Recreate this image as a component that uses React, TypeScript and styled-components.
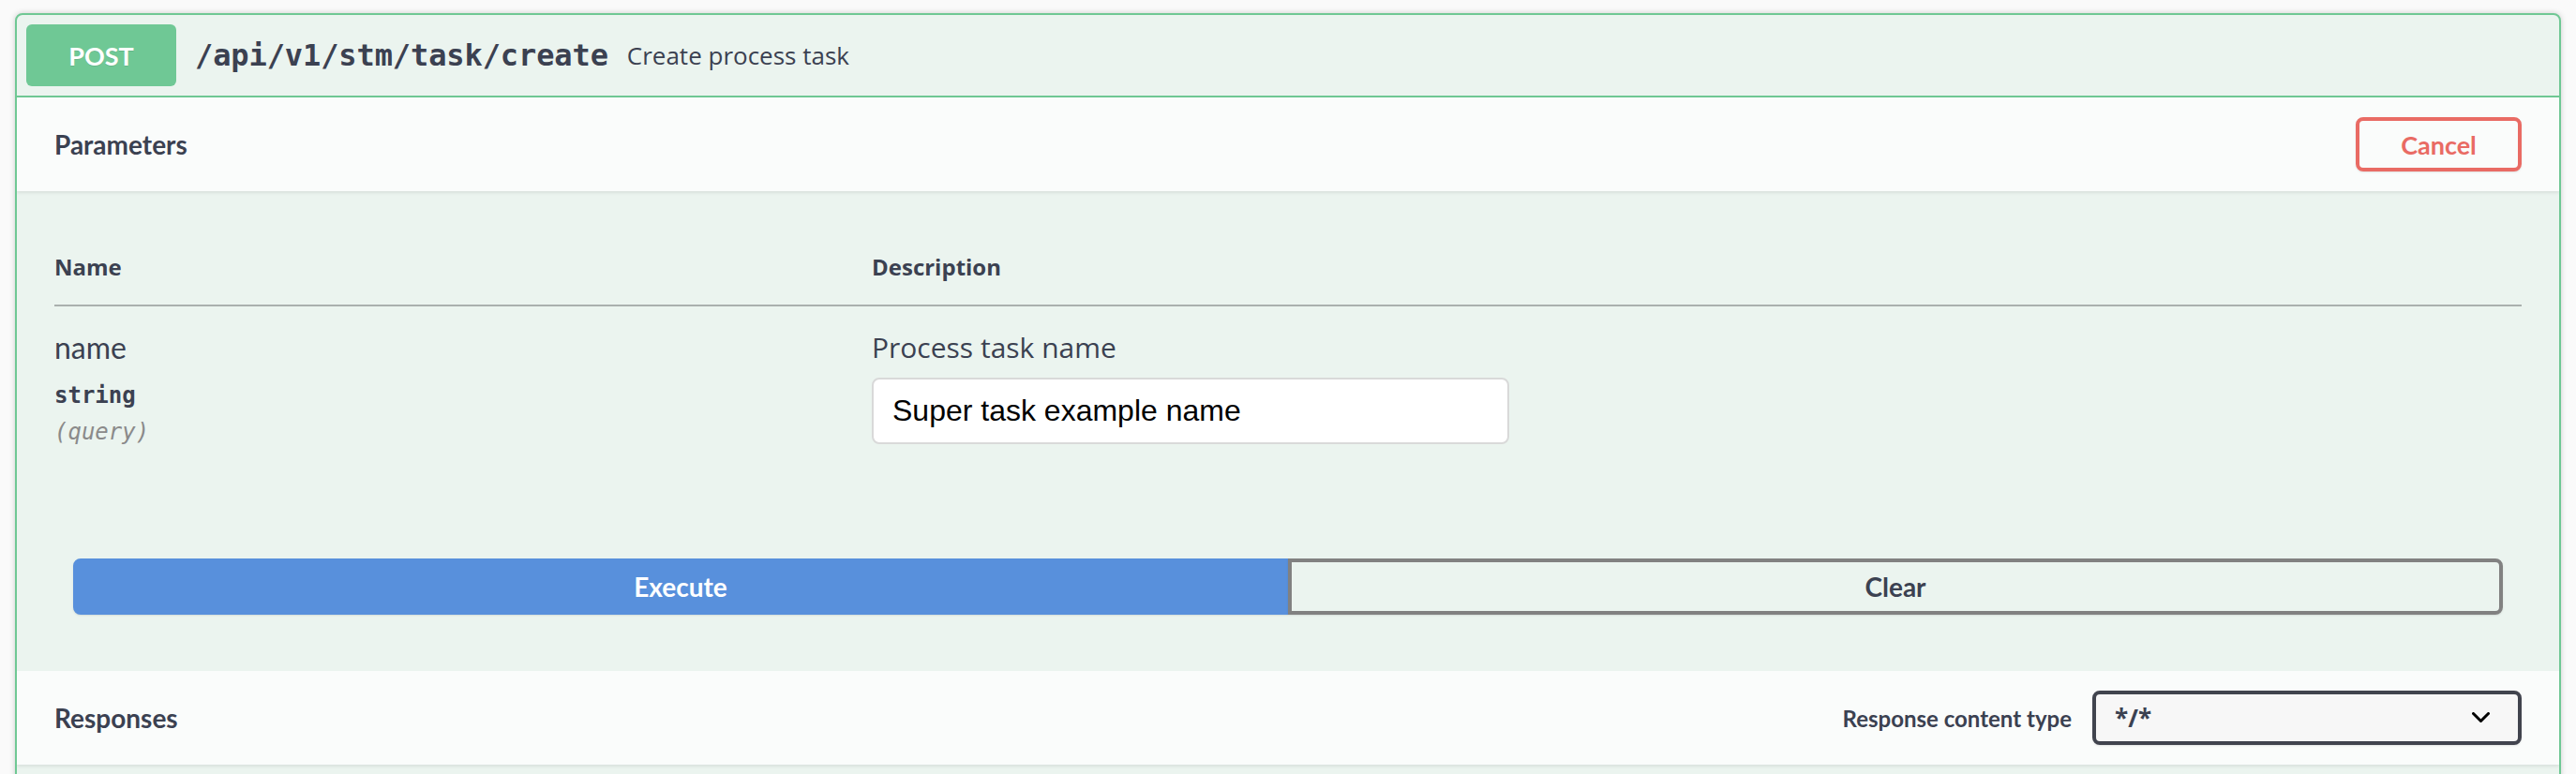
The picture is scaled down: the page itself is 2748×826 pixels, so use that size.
import React from "react";
import styled, { createGlobalStyle } from "styled-components";

const GlobalStyle = createGlobalStyle`
  html, body { margin: 0; padding: 0; background: #fafafa; }
  body { font-family: "Open Sans", "Noto Sans", sans-serif; color: #3b4151; }
  * { box-sizing: border-box; }
`;

const Page = styled.div`
  padding: 14px 16px 0;
`;

const OpBlock = styled.section`
  border: 2px solid #6fc894;
  border-radius: 8px;
  background: #ebf4ef;
  box-shadow: 0 0 6px rgba(0, 0, 0, 0.19);
  overflow: hidden;
`;

const Summary = styled.div`
  display: flex;
  align-items: center;
  padding: 10px;
  border-bottom: 2px solid #6fc894;
`;

const Method = styled.span`
  display: flex;
  align-items: center;
  justify-content: center;
  width: 160px;
  height: 66px;
  border-radius: 6px;
  background: #6fc895;
  color: #fff;
  font-family: Lato, "Open Sans", sans-serif;
  font-weight: 700;
  font-size: 27px;
  text-shadow: 0 1px 0 rgba(0, 0, 0, 0.1);
`;

const Path = styled.span`
  padding: 0 20px;
  font-family: "DejaVu Sans Mono", "Liberation Mono", monospace;
  font-weight: 700;
  font-size: 32px;
  color: #3b4151;
  letter-spacing: -0.1px;
`;

const Summary_Desc = styled.span`
  font-family: "Open Sans", sans-serif;
  font-size: 26px;
  color: #3b4151;
`;

const SectionHeader = styled.div`
  display: flex;
  align-items: center;
  justify-content: space-between;
  min-height: 100px;
  padding: 0 40px;
  background: #fafcfb;
  box-shadow: 0 2px 3px rgba(0, 0, 0, 0.08);
  position: relative;
`;

const SectionTitle = styled.h4`
  margin: 0;
  font-family: Lato, "Open Sans", sans-serif;
  font-weight: 700;
  font-size: 28px;
  color: #3b4151;
`;

const CancelButton = styled.button`
  width: 177px;
  height: 58px;
  border: 4px solid #e96b64;
  border-radius: 8px;
  background: transparent;
  color: #e96b64;
  font-family: Lato, "Open Sans", sans-serif;
  font-weight: 700;
  font-size: 27px;
  box-shadow: 0 1px 2px rgba(0, 0, 0, 0.1);
  cursor: pointer;
`;

const TableContainer = styled.div`
  padding: 40px 40px 40px;
`;

const Row = styled.div<{ $head?: boolean }>`
  display: grid;
  grid-template-columns: 872px 1fr;
  padding: ${(p) => (p.$head ? "24px 0" : "24px 0 21px")};
  border-bottom: ${(p) => (p.$head ? "2px solid #aab0ae" : "none")};
`;

const HeadCell = styled.div`
  font-family: "Open Sans", sans-serif;
  font-weight: 700;
  font-size: 24px;
  line-height: 33px;
  color: #3b4151;
`;

const Cell = styled.div`
  display: flex;
  flex-direction: column;
  align-items: flex-start;
`;

const ParamName = styled.div`
  font-family: Lato, "Open Sans", sans-serif;
  font-size: 32px;
  line-height: 40px;
  color: #3b4151;
`;

const ParamType = styled.div<{ $italic?: boolean }>`
  font-family: "DejaVu Sans Mono", "Liberation Mono", monospace;
  font-size: 24px;
  line-height: 28px;
  font-weight: ${(p) => (p.$italic ? 400 : 700)};
  font-style: ${(p) => (p.$italic ? "italic" : "normal")};
  color: ${(p) => (p.$italic ? "#8a8a8a" : "#3b4151")};
  margin-top: ${(p) => (p.$italic ? "11px" : "17px")};
`;

const DescText = styled.p`
  margin: 0 0 12px;
  font-family: "Open Sans", sans-serif;
  font-size: 30px;
  line-height: 40px;
  color: #3b4151;
`;

const TextInput = styled.input`
  width: 680px;
  height: 71px;
  padding: 0 20px;
  border: 2px solid #d9d9d9;
  border-radius: 8px;
  background: #fff;
  font-family: "Liberation Sans", Arial, sans-serif;
  font-size: 32px;
  color: #000;
  outline: none;
`;

const BtnGroup = styled.div`
  display: flex;
  padding: 60px;
`;

const ActionButton = styled.button<{ $primary?: boolean }>`
  flex: 1;
  height: 60px;
  border: 4px solid ${(p) => (p.$primary ? "#5890dc" : "#818181")};
  border-radius: ${(p) => (p.$primary ? "8px 0 0 8px" : "0 8px 8px 0")};
  background: ${(p) => (p.$primary ? "#5890dc" : "transparent")};
  color: ${(p) => (p.$primary ? "#fff" : "#3b4151")};
  font-family: Lato, "Open Sans", sans-serif;
  font-weight: 700;
  font-size: 28px;
  box-shadow: 0 1px 2px rgba(0, 0, 0, 0.1);
  cursor: pointer;
`;

const MediaControl = styled.div`
  display: flex;
  align-items: center;
  gap: 22px;
`;

const MediaLabel = styled.span`
  font-family: Lato, "Open Sans", sans-serif;
  font-weight: 700;
  font-size: 24px;
  color: #3b4151;
`;

const SelectBox = styled.div`
  display: flex;
  align-items: center;
  justify-content: space-between;
  width: 458px;
  height: 58px;
  padding: 0 30px 0 20px;
  border: 4px solid #41444e;
  border-radius: 8px;
  background: #f7f7f7;
  box-shadow: 0 1px 2px rgba(0, 0, 0, 0.1);
  font-family: "Open Sans", sans-serif;
  font-weight: 700;
  font-size: 26px;
  color: #3b4151;
`;

const ResponsesBody = styled.div`
  height: 80px;
`;

const Chevron = () => (
  <svg width="19" height="12" viewBox="0 0 19 12" fill="none">
    <path d="M1.5 1.5 L9.5 9.5 L17.5 1.5" stroke="#000" strokeWidth="3" strokeLinecap="round" strokeLinejoin="round" />
  </svg>
);

export default function App() {
  return (
    <>
      <GlobalStyle />
      <Page>
        <OpBlock>
          <Summary>
            <Method>POST</Method>
            <Path>/api/v1/stm/task/create</Path>
            <Summary_Desc>Create process task</Summary_Desc>
          </Summary>
          <SectionHeader>
            <SectionTitle>Parameters</SectionTitle>
            <CancelButton>Cancel</CancelButton>
          </SectionHeader>
          <TableContainer>
            <Row $head>
              <HeadCell>Name</HeadCell>
              <HeadCell>Description</HeadCell>
            </Row>
            <Row>
              <Cell>
                <ParamName>name</ParamName>
                <ParamType>string</ParamType>
                <ParamType $italic>(query)</ParamType>
              </Cell>
              <Cell>
                <DescText>Process task name</DescText>
                <TextInput defaultValue="Super task example name" />
              </Cell>
            </Row>
          </TableContainer>
          <BtnGroup>
            <ActionButton $primary>Execute</ActionButton>
            <ActionButton>Clear</ActionButton>
          </BtnGroup>
          <SectionHeader>
            <SectionTitle>Responses</SectionTitle>
            <MediaControl>
              <MediaLabel>Response content type</MediaLabel>
              <SelectBox>
                <span>*/*</span>
                <Chevron />
              </SelectBox>
            </MediaControl>
          </SectionHeader>
          <ResponsesBody />
        </OpBlock>
      </Page>
    </>
  );
}
